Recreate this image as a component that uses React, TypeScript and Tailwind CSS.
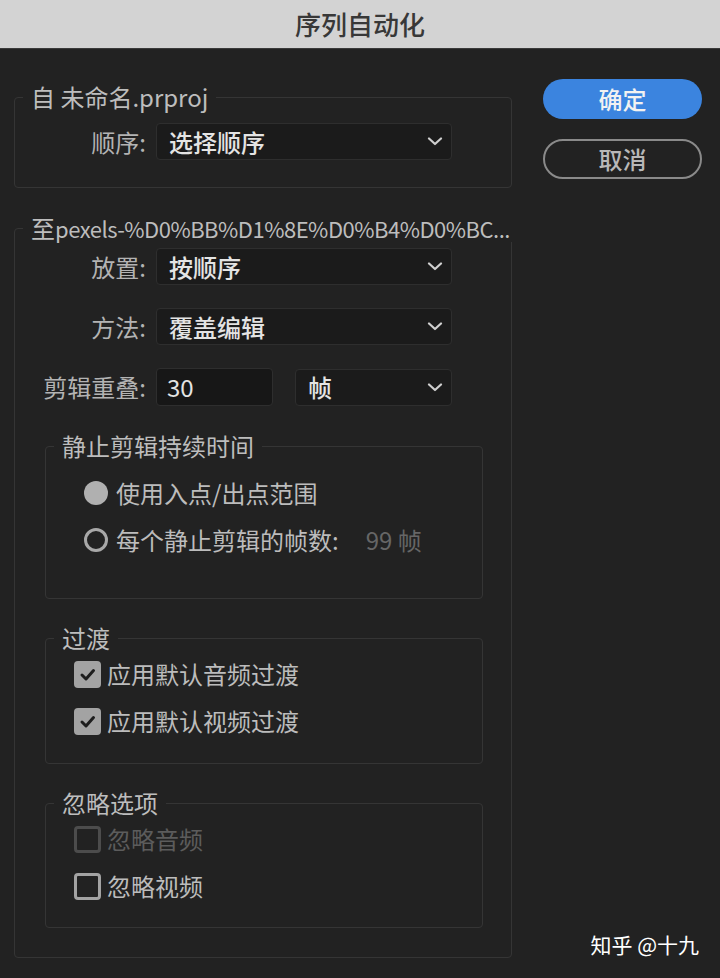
import { ReactNode } from "react";

const Chevron = () => (
  <svg width="16" height="9" viewBox="0 0 16 9" fill="none">
    <path
      d="M2 1.5 L8 7 L14 1.5"
      stroke="#cfcfcf"
      strokeWidth="2.2"
      strokeLinecap="round"
      strokeLinejoin="round"
    />
  </svg>
);

const Select = ({ value, width }: { value: string; width: string }) => (
  <div
    className={`${width} h-[37px] bg-[#1b1b1b] border border-[#2e2e2e] rounded-[4px] flex items-center justify-between pl-[12px] pr-[8px] text-[#e4e4e4] font-medium`}
  >
    <span>{value}</span>
    <Chevron />
  </div>
);

const Row = ({ label, children }: { label: string; children: ReactNode }) => (
  <div className="flex items-center">
    <div className="w-[131px] shrink-0 text-right text-[#b3b3b3] whitespace-nowrap">
      {label}
    </div>
    <div className="ml-[10px] flex items-center">{children}</div>
  </div>
);

const Group = ({
  title,
  children,
  className = "",
}: {
  title: ReactNode;
  children: ReactNode;
  className?: string;
}) => (
  <fieldset
    className={`min-w-0 border border-[#353535] rounded-[4px] ${className}`}
  >
    <legend className="ml-[8px] px-[8px] leading-[28px] text-[#bdbdbd] whitespace-nowrap">
      {title}
    </legend>
    {children}
  </fieldset>
);

const Radio = ({ checked }: { checked: boolean }) =>
  checked ? (
    <div className="w-[24px] h-[24px] rounded-full bg-[#b0b0b0]" />
  ) : (
    <div className="w-[24px] h-[24px] rounded-full border-[3px] border-[#a8a8a8]" />
  );

const Checkbox = ({
  checked,
  disabled,
}: {
  checked?: boolean;
  disabled?: boolean;
}) => {
  if (checked) {
    return (
      <div className="w-[27px] h-[27px] rounded-[4px] bg-[#a3a3a3] flex items-center justify-center">
        <svg width="27" height="27" viewBox="0 0 27 27" fill="none">
          <path
            d="M8 14 L12 18 L19.5 9.5"
            stroke="#1e1e1e"
            strokeWidth="3"
            strokeLinecap="round"
            strokeLinejoin="round"
          />
        </svg>
      </div>
    );
  }
  return (
    <div
      className={`w-[27px] h-[27px] rounded-[4px] ${
        disabled ? "border-[3px] border-[#4c4c4c]" : "border-[3px] border-[#a3a3a3]"
      }`}
    />
  );
};

const CheckRow = ({
  label,
  checked,
  disabled,
}: {
  label: string;
  checked?: boolean;
  disabled?: boolean;
}) => (
  <div className="flex items-center h-[28px] pl-[28px]">
    <Checkbox checked={checked} disabled={disabled} />
    <span
      className={`ml-[6px] ${disabled ? "text-[#5c5c5c]" : "text-[#bcbcbc]"}`}
    >
      {label}
    </span>
  </div>
);

export default function App() {
  return (
    <div className="w-[720px] h-[978px] bg-[#222222] flex flex-col font-['Noto_Sans_CJK_SC','Noto_Sans',sans-serif] text-[24px] leading-[28px]">
      <div className="h-[49px] shrink-0 bg-[#d3d3d3] border-b border-[#3a3a3a] flex items-center justify-center">
        <h1 className="text-[26px] font-medium text-[#383838]">序列自动化</h1>
      </div>

      <div className="flex-1 flex pl-[14px] pt-[30px]">
        {/* settings column */}
        <div className="w-[498px] shrink-0 mt-[4px]">
          <Group title="自 未命名.prproj">
            <div className="pt-[12px] pb-[27px]">
              <Row label="顺序:">
                <Select value="选择顺序" width="w-[296px]" />
              </Row>
            </div>
          </Group>

          <Group
            title={
              <>
                至
                <span className="text-[22px] tracking-[-0.5px]">
                  pexels-%D0%BB%D1%8E%D0%B4%D0%BC...
                </span>
              </>
            }
            className="mt-[26px]"
          >
            <div className="pl-[30px] pr-[28px] pt-[6px] pb-[29px]">
              <div className="-ml-[30px] flex flex-col gap-[23px]">
                <Row label="放置:">
                  <Select value="按顺序" width="w-[296px]" />
                </Row>
                <Row label="方法:">
                  <Select value="覆盖编辑" width="w-[296px]" />
                </Row>
                <Row label="剪辑重叠:">
                  <div className="w-[117px] h-[38px] bg-[#171717] border border-[#2e2e2e] rounded-[4px] flex items-center pl-[10px] text-[#e4e4e4]">
                    30
                  </div>
                  <div className="ml-[22px]">
                    <Select value="帧" width="w-[157px]" />
                  </div>
                </Row>
              </div>

              <Group title="静止剪辑持续时间" className="mt-[26px]">
                <div className="pt-[19px] pb-[44px] pl-[38px] flex flex-col gap-[19px]">
                  <div className="flex items-center h-[28px]">
                    <Radio checked />
                    <span className="ml-[8px] text-[#bcbcbc]">使用入点/出点范围</span>
                  </div>
                  <div className="flex items-center h-[28px]">
                    <Radio checked={false} />
                    <span className="ml-[8px] text-[#bcbcbc]">每个静止剪辑的帧数:</span>
                    <span className="ml-[27px] text-[#666666]">99 帧</span>
                  </div>
                </div>
              </Group>

              <Group title="过渡" className="mt-[25px]">
                <div className="pt-[8px] pb-[28px] flex flex-col gap-[19px]">
                  <CheckRow label="应用默认音频过渡" checked />
                  <CheckRow label="应用默认视频过渡" checked />
                </div>
              </Group>

              <Group title="忽略选项" className="mt-[25px]">
                <div className="pt-[8px] pb-[27px] flex flex-col gap-[19px]">
                  <CheckRow label="忽略音频" disabled />
                  <CheckRow label="忽略视频" />
                </div>
              </Group>
            </div>
          </Group>
        </div>

        {/* action buttons */}
        <div className="ml-[31px] w-[159px] flex flex-col">
          <button className="h-[40px] rounded-full bg-[#3b84df] text-[#f2f2f2] font-medium">
            确定
          </button>
          <button className="mt-[20px] h-[40px] rounded-full border-2 border-[#8a8a8a] text-[#b8b8b8] font-medium">
            取消
          </button>
          <div className="mt-auto mb-[20px] text-right pr-[3px] text-[21px] text-white">
            知乎 @十九
          </div>
        </div>
      </div>
    </div>
  );
}
